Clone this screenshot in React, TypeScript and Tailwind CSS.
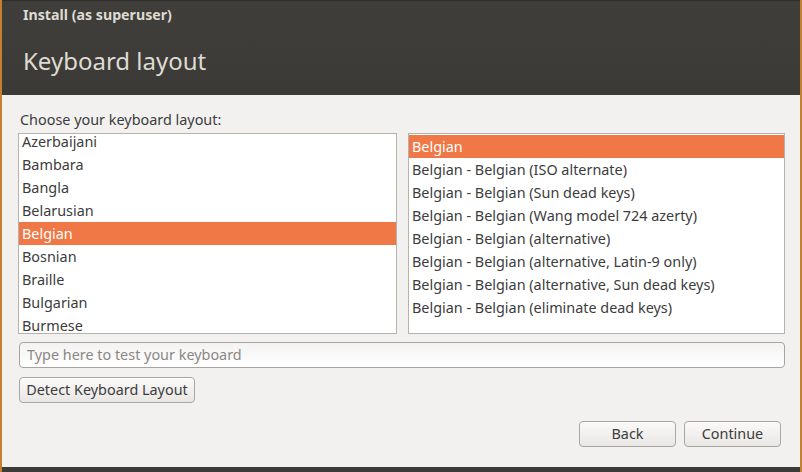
const leftItems = [
  "Azerbaijani",
  "Bambara",
  "Bangla",
  "Belarusian",
  "Belgian",
  "Bosnian",
  "Braille",
  "Bulgarian",
  "Burmese",
];

const rightItems = [
  "Belgian",
  "Belgian - Belgian (ISO alternate)",
  "Belgian - Belgian (Sun dead keys)",
  "Belgian - Belgian (Wang model 724 azerty)",
  "Belgian - Belgian (alternative)",
  "Belgian - Belgian (alternative, Latin-9 only)",
  "Belgian - Belgian (alternative, Sun dead keys)",
  "Belgian - Belgian (eliminate dead keys)",
];

const font = { fontFamily: '"Noto Sans", "Open Sans", sans-serif' };

const ListBox = ({
  items,
  selectedIndex,
  offset,
  width,
}: {
  items: string[];
  selectedIndex: number;
  offset: string;
  width: string;
}) => (
  <div className={`${width} h-[201px] border border-[#b6b3ae] bg-white overflow-hidden`}>
    <ul className={offset}>
      {items.map((item, i) => (
        <li
          key={i}
          className={`h-[23px] flex items-center pl-[3px] text-[14.4px] ${
            i === selectedIndex ? "bg-[#f07746] text-white" : "text-[#3c3c3c]"
          }`}
        >
          {item}
        </li>
      ))}
    </ul>
  </div>
);

const Button = ({ label, className }: { label: string; className: string }) => (
  <button
    className={`h-[26px] rounded-[4px] border border-[#a9a7a3] bg-gradient-to-b from-[#fbfaf9] to-[#e9e7e4] text-[14.4px] text-[#3c3c3c] shadow-[inset_0_1px_0_#ffffff] ${className}`}
  >
    {label}
  </button>
);

export default function App() {
  return (
    <div
      className="w-[802px] h-[472px] flex flex-col border-x-2 border-[#c4802e] bg-[#f2f1f0] overflow-hidden"
      style={font}
    >
      <div className="h-[95px] bg-gradient-to-b from-[#3f3e3a] to-[#3b3a36] border-t border-[#2e2d2a] flex flex-col pl-[21px]">
        <div className="pt-[3px] h-[24px] text-[14.2px] font-bold text-[#dfdbd2]">Install (as superuser)</div>
        <div className="mt-[24px] text-[24px] text-[#dfdbd2] leading-none">Keyboard layout</div>
      </div>
      <div className="flex-1 flex flex-col pl-[16px] pr-[15px] pt-[15px]">
        <div className="text-[14.4px] text-[#3c3c3c] leading-[20px] pl-[2px]">Choose your keyboard layout:</div>
        <div className="mt-[3px] flex gap-[11px]">
          <ListBox items={leftItems} selectedIndex={4} offset="-mt-[4px]" width="w-[379px]" />
          <ListBox items={rightItems} selectedIndex={0} offset="mt-[1px]" width="w-[377px]" />
        </div>
        <div className="mt-[8px] h-[26px] ml-[1px] rounded-[4px] border border-[#a6a4a0] bg-gradient-to-b from-[#f4f3f2] to-white flex items-center pl-[7px] text-[14.4px] text-[#8a8784]">
          Type here to test your keyboard
        </div>
        <div className="mt-[9px] pl-[1px]">
          <Button label="Detect Keyboard Layout" className="w-[176px]" />
        </div>
        <div className="mt-[18px] flex justify-end gap-[8px] pr-[4px]">
          <Button label="Back" className="w-[97px]" />
          <Button label="Continue" className="w-[97px]" />
        </div>
      </div>
      <div className="h-[5px] bg-[#3c3b37] -mx-[2px]" />
    </div>
  );
}
